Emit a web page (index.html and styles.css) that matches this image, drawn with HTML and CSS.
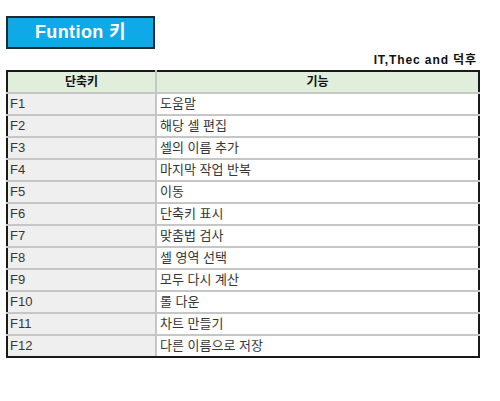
FILE: index.html
```html
<!DOCTYPE html>
<html lang="ko">
<head>
<meta charset="utf-8">
<link rel="stylesheet" href="styles.css">
</head>
<body>
<div class="page">
  <div class="title">Funtion 키</div>
  <div class="credit">IT,Thec and 덕후</div>
  <table class="keys">
    <thead>
      <tr><th class="c1">단축키</th><th>기능</th></tr>
    </thead>
    <tbody>
      <tr><td class="c1">F1</td><td>도움말</td></tr>
      <tr><td class="c1">F2</td><td>해당 셀 편집</td></tr>
      <tr><td class="c1">F3</td><td>셀의 이름 추가</td></tr>
      <tr><td class="c1">F4</td><td>마지막 작업 반복</td></tr>
      <tr><td class="c1">F5</td><td>이동</td></tr>
      <tr><td class="c1">F6</td><td>단축키 표시</td></tr>
      <tr><td class="c1">F7</td><td>맞춤법 검사</td></tr>
      <tr><td class="c1">F8</td><td>셀 영역 선택</td></tr>
      <tr><td class="c1">F9</td><td>모두 다시 계산</td></tr>
      <tr><td class="c1">F10</td><td>롤 다운</td></tr>
      <tr><td class="c1">F11</td><td>차트 만들기</td></tr>
      <tr><td class="c1">F12</td><td>다른 이름으로 저장</td></tr>
    </tbody>
  </table>
</div>
</body>
</html>
```

FILE: styles.css
```css
html, body {
  margin: 0;
  padding: 0;
  background: #ffffff;
}
body {
  font-family: "Liberation Sans", Arial, "Noto Sans CJK KR", sans-serif;
}
.page {
  width: 500px;
  height: 401px;
  padding: 16px 0 0 6px;
  box-sizing: border-box;
}
.title {
  width: 149px;
  height: 33px;
  box-sizing: border-box;
  background: #10a9e8;
  border: 2px solid #1c2a33;
  color: #ffffff;
  font-weight: bold;
  font-size: 18px;
  line-height: 29px;
  text-align: center;
  letter-spacing: 0.4px;
}
.credit {
  width: 471px;
  height: 21px;
  line-height: 23px;
  text-align: right;
  font-size: 12px;
  font-weight: bold;
  color: #111;
  letter-spacing: 0.9px;
}
.keys {
  width: 474px;
  border-collapse: collapse;
  table-layout: fixed;
}
.keys th, .keys td {
  border: 2px solid #c6c6c6;
  padding: 0 3px;
  height: 22px;
  line-height: 20px;
  box-sizing: border-box;
}
.keys tr > :first-child {
  border-left-color: #1a1a1a;
}
.keys tr > :last-child {
  border-right-color: #1a1a1a;
}
.keys thead th {
  border-top-color: #1a1a1a;
}
.keys tbody tr:last-child td {
  border-bottom-color: #1a1a1a;
}
.keys th {
  background: #e1eedb;
  font-size: 12px;
  font-weight: bold;
  color: #111;
  text-align: center;
}
.keys td {
  font-size: 13px;
  color: #363636;
  text-align: left;
  background: #fff;
}
.keys .c1 {
  width: 149px;
}
.keys td.c1 {
  background: #efefef;
  padding-left: 2px;
}
```
